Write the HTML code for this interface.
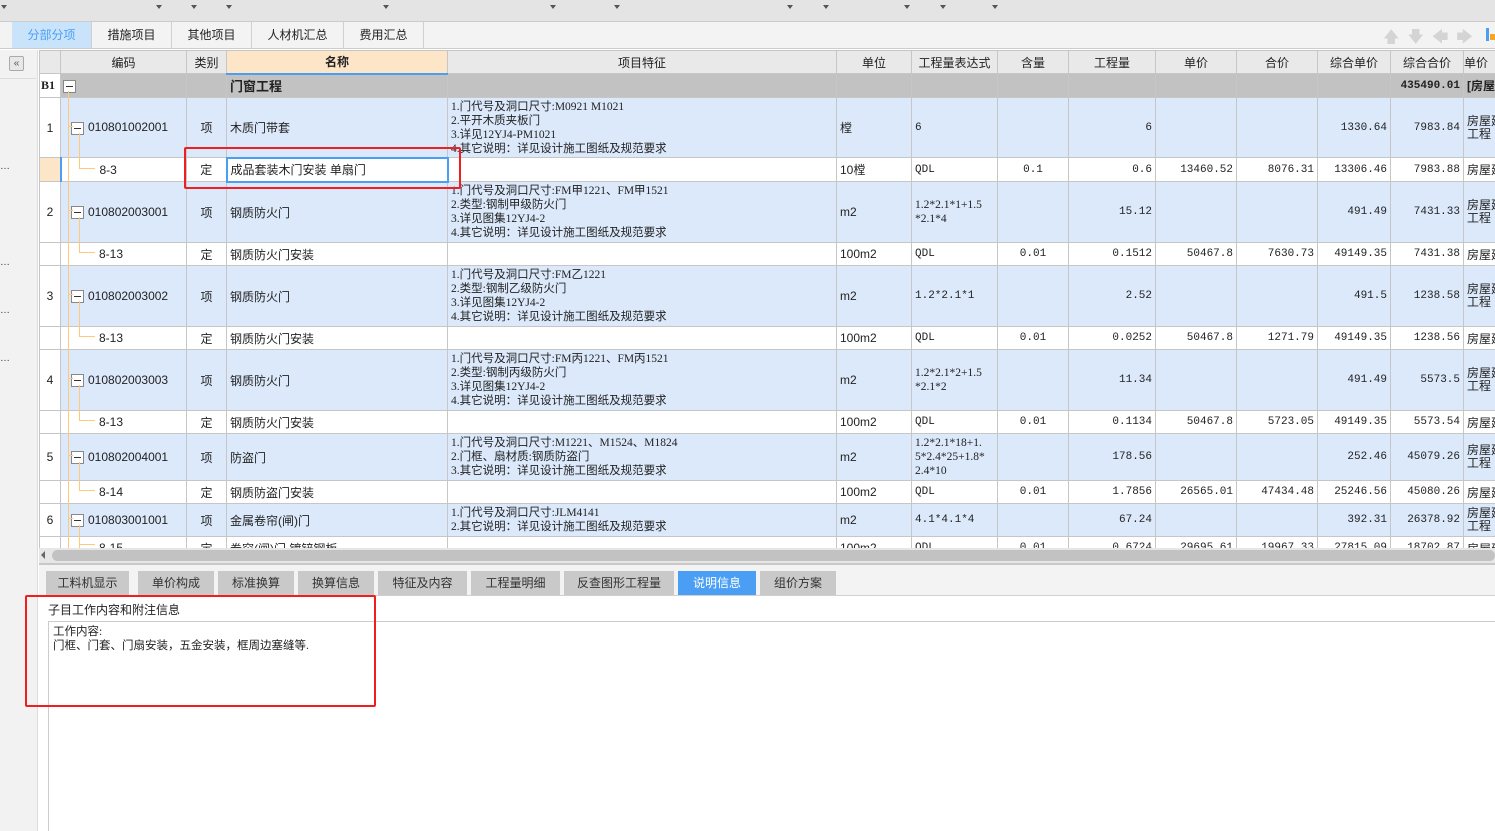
<!DOCTYPE html>
<html><head><meta charset="utf-8"><style>
*{margin:0;padding:0;box-sizing:border-box}
body{width:1495px;height:831px;overflow:hidden;background:#fff;font-family:"Liberation Sans","Noto Sans CJK SC",sans-serif;font-size:12px;color:#222;position:relative}
.a{position:absolute}
.tri{position:absolute;top:5px;width:0;height:0;border-left:3px solid transparent;border-right:3px solid transparent;border-top:4px solid #555}
.tab{position:absolute;top:22px;height:26px;line-height:27px;text-align:center;border-right:1px solid #d0d0d0;font-size:12px;color:#222}
table{border-collapse:collapse;table-layout:fixed;position:absolute;left:0;top:0;width:1464px}
td{border:1px solid #c6c6c6;padding:0 3px;white-space:nowrap;overflow:hidden;vertical-align:middle}
th{border:1px solid #c6c6c6;background:#e9e9e9;font-weight:normal;font-size:12px;height:23px}
.it td{background:#dce9fb}
.it td.n,.ch td.n{background:#fff;text-align:center}
.ch td{background:#fff}
.m{font-family:"Liberation Mono","Noto Sans CJK SC",monospace;font-size:11px}
.f{font-size:11.5px;line-height:14px;white-space:pre;font-family:"Liberation Serif","Noto Sans CJK SC",sans-serif}
.r{text-align:right}
.c{text-align:center}
.box{display:inline-block;width:13px;height:13px;border:1px solid #888;background:#fff;vertical-align:middle;position:relative;margin-left:10px;margin-right:4px}
.box:after{content:"";position:absolute;left:2px;right:2px;top:5px;height:1px;background:#333}
.ln{position:absolute;background:#ffc87a}
.bt{position:absolute;top:571px;height:24px;line-height:24px;text-align:center;background:#c9c9c9;color:#333;font-size:12px}
</style></head><body>
<div class="a" style="left:0;top:0;width:1495px;height:22px;background:#e4e4e4;border-bottom:1px solid #ccc"></div>
<div class="tri" style="left:1px"></div><div class="tri" style="left:156px"></div><div class="tri" style="left:191px"></div><div class="tri" style="left:226px"></div><div class="tri" style="left:383px"></div><div class="tri" style="left:550px"></div><div class="tri" style="left:614px"></div><div class="tri" style="left:787px"></div><div class="tri" style="left:823px"></div><div class="tri" style="left:904px"></div><div class="tri" style="left:940px"></div><div class="tri" style="left:992px"></div>
<div class="a" style="left:0;top:22px;width:1495px;height:27px;background:#f3f3f3;border-bottom:1px solid #ccc"></div>
<div class="tab" style="left:12px;width:80px;background:#c9e3fb;color:#4a9ff5">分部分项</div>
<div class="tab" style="left:92px;width:80px">措施项目</div>
<div class="tab" style="left:172px;width:80px">其他项目</div>
<div class="tab" style="left:252px;width:92px">人材机汇总</div>
<div class="tab" style="left:344px;width:80px">费用汇总</div>
<div class="a" style="left:1383px;top:26px;color:#d4d4d4;font-size:16px;letter-spacing:8px">🡅🡇🡄🡆</div>
<div class="a" style="left:1486px;top:28px;width:3px;height:13px;background:#4a9ff5"></div>
<div class="a" style="left:1490px;top:34px;width:5px;height:6px;background:#f5a623"></div>
<div class="a" style="left:0;top:50px;width:38px;height:781px;background:#f2f2f2;border-right:1px solid #ddd"></div>
<div class="a" style="left:9px;top:56px;width:15px;height:15px;border:1px solid #aaa;border-radius:2px;background:#e8e8e8;font-size:10px;line-height:13px;text-align:center;color:#555">&laquo;</div>
<div class="a" style="left:0;top:78px;width:36px;height:1px;background:#ddd"></div>
<div class="a" style="left:0;top:161px;font-size:10px;color:#336">…</div>
<div class="a" style="left:0;top:257px;font-size:10px;color:#336">…</div>
<div class="a" style="left:0;top:305px;font-size:10px;color:#336">…</div>
<div class="a" style="left:0;top:353px;font-size:10px;color:#336">…</div>
<div class="a" style="left:39px;top:50px;width:1456px;height:498px;overflow:hidden">
<table>
<colgroup><col style="width:21px"><col style="width:126px"><col style="width:40px"><col style="width:221px"><col style="width:389px"><col style="width:75px"><col style="width:86px"><col style="width:71px"><col style="width:87px"><col style="width:81px"><col style="width:81px"><col style="width:73px"><col style="width:73px"><col style="width:40px"></colgroup>
<tr style="height:23px"><th></th><th>编码</th><th>类别</th><th style="background:#fde5c8;font-weight:bold;border-bottom:2px solid #4a9ff5">名称</th><th>项目特征</th><th>单位</th><th>工程量表达式</th><th>含量</th><th>工程量</th><th>单价</th><th>合价</th><th>综合单价</th><th>综合合价</th><th style="text-align:left">单价</th></tr>
<tr style="height:24px;background:#c2c2c2;font-weight:bold"><td style="background:#fff;font-family:'Liberation Serif',serif;font-weight:bold;padding:0 1px">B1</td><td style="padding:0"><span class="box" style="margin-left:2px"></span></td><td></td><td style="font-size:13px">门窗工程</td><td></td><td></td><td></td><td></td><td></td><td></td><td></td><td></td><td class="r m" style="font-weight:bold">435490.01</td><td style="font-weight:bold">[房屋</td></tr>
<tr class="it" style="height:60px"><td class="n">1</td><td style="padding:0"><span class="box"></span>010801002001</td><td class="c">项</td><td>木质门带套</td><td class="f">1.门代号及洞口尺寸:M0921 M1021
2.平开木质夹板门
3.详见12YJ4-PM1021
4.其它说明：详见设计施工图纸及规范要求</td><td>樘</td><td class="m">6</td><td></td><td class="r m">6</td><td></td><td></td><td class="r m">1330.64</td><td class="r m">7983.84</td><td style="line-height:13px">房屋建<br>工程</td></tr>
<tr class="ch" style="height:24px"><td class="n" style="background:#fde5c8;border-right:2px solid #4a9ff5"></td><td style="padding-left:38px">8-3</td><td class="c">定</td><td style="border:2px solid #4a9ff5">成品套装木门安装 单扇门</td><td></td><td>10樘</td><td class="m">QDL</td><td class="c m">0.1</td><td class="r m">0.6</td><td class="r m">13460.52</td><td class="r m">8076.31</td><td class="r m">13306.46</td><td class="r m">7983.88</td><td>房屋建</td></tr>
<tr class="it" style="height:61px"><td class="n">2</td><td style="padding:0"><span class="box"></span>010802003001</td><td class="c">项</td><td>钢质防火门</td><td class="f">1.门代号及洞口尺寸:FM甲1221、FM甲1521
2.类型:钢制甲级防火门
3.详见图集12YJ4-2
4.其它说明：详见设计施工图纸及规范要求</td><td>m2</td><td class="f">1.2*2.1*1+1.5
*2.1*4</td><td></td><td class="r m">15.12</td><td></td><td></td><td class="r m">491.49</td><td class="r m">7431.33</td><td style="line-height:13px">房屋建<br>工程</td></tr>
<tr class="ch" style="height:23px"><td class="n"></td><td style="padding-left:38px">8-13</td><td class="c">定</td><td>钢质防火门安装</td><td></td><td>100m2</td><td class="m">QDL</td><td class="c m">0.01</td><td class="r m">0.1512</td><td class="r m">50467.8</td><td class="r m">7630.73</td><td class="r m">49149.35</td><td class="r m">7431.38</td><td>房屋建</td></tr>
<tr class="it" style="height:61px"><td class="n">3</td><td style="padding:0"><span class="box"></span>010802003002</td><td class="c">项</td><td>钢质防火门</td><td class="f">1.门代号及洞口尺寸:FM乙1221
2.类型:钢制乙级防火门
3.详见图集12YJ4-2
4.其它说明：详见设计施工图纸及规范要求</td><td>m2</td><td class="m">1.2*2.1*1</td><td></td><td class="r m">2.52</td><td></td><td></td><td class="r m">491.5</td><td class="r m">1238.58</td><td style="line-height:13px">房屋建<br>工程</td></tr>
<tr class="ch" style="height:23px"><td class="n"></td><td style="padding-left:38px">8-13</td><td class="c">定</td><td>钢质防火门安装</td><td></td><td>100m2</td><td class="m">QDL</td><td class="c m">0.01</td><td class="r m">0.0252</td><td class="r m">50467.8</td><td class="r m">1271.79</td><td class="r m">49149.35</td><td class="r m">1238.56</td><td>房屋建</td></tr>
<tr class="it" style="height:61px"><td class="n">4</td><td style="padding:0"><span class="box"></span>010802003003</td><td class="c">项</td><td>钢质防火门</td><td class="f">1.门代号及洞口尺寸:FM丙1221、FM丙1521
2.类型:钢制丙级防火门
3.详见图集12YJ4-2
4.其它说明：详见设计施工图纸及规范要求</td><td>m2</td><td class="f">1.2*2.1*2+1.5
*2.1*2</td><td></td><td class="r m">11.34</td><td></td><td></td><td class="r m">491.49</td><td class="r m">5573.5</td><td style="line-height:13px">房屋建<br>工程</td></tr>
<tr class="ch" style="height:23px"><td class="n"></td><td style="padding-left:38px">8-13</td><td class="c">定</td><td>钢质防火门安装</td><td></td><td>100m2</td><td class="m">QDL</td><td class="c m">0.01</td><td class="r m">0.1134</td><td class="r m">50467.8</td><td class="r m">5723.05</td><td class="r m">49149.35</td><td class="r m">5573.54</td><td>房屋建</td></tr>
<tr class="it" style="height:47px"><td class="n">5</td><td style="padding:0"><span class="box"></span>010802004001</td><td class="c">项</td><td>防盗门</td><td class="f">1.门代号及洞口尺寸:M1221、M1524、M1824
2.门框、扇材质:钢质防盗门
3.其它说明：详见设计施工图纸及规范要求</td><td>m2</td><td class="f">1.2*2.1*18+1.
5*2.4*25+1.8*
2.4*10</td><td></td><td class="r m">178.56</td><td></td><td></td><td class="r m">252.46</td><td class="r m">45079.26</td><td style="line-height:13px">房屋建<br>工程</td></tr>
<tr class="ch" style="height:23px"><td class="n"></td><td style="padding-left:38px">8-14</td><td class="c">定</td><td>钢质防盗门安装</td><td></td><td>100m2</td><td class="m">QDL</td><td class="c m">0.01</td><td class="r m">1.7856</td><td class="r m">26565.01</td><td class="r m">47434.48</td><td class="r m">25246.56</td><td class="r m">45080.26</td><td>房屋建</td></tr>
<tr class="it" style="height:33px"><td class="n">6</td><td style="padding:0"><span class="box"></span>010803001001</td><td class="c">项</td><td>金属卷帘(闸)门</td><td class="f">1.门代号及洞口尺寸:JLM4141
2.其它说明：详见设计施工图纸及规范要求</td><td>m2</td><td class="m">4.1*4.1*4</td><td></td><td class="r m">67.24</td><td></td><td></td><td class="r m">392.31</td><td class="r m">26378.92</td><td style="line-height:13px">房屋建<br>工程</td></tr>
<tr class="ch" style="height:23px"><td class="n"></td><td style="padding-left:38px">8-15</td><td class="c">定</td><td>卷帘(闸)门 镀锌钢板</td><td></td><td>100m2</td><td class="m">QDL</td><td class="c m">0.01</td><td class="r m">0.6724</td><td class="r m">29695.61</td><td class="r m">19967.33</td><td class="r m">27815.09</td><td class="r m">18702.87</td><td>房屋建</td></tr>
</table>
</div>
<div class="ln" style="left:68px;top:91px;width:1px;height:457px"></div>
<div class="ln" style="left:68px;top:126px;width:5px;height:1px"></div>
<div class="ln" style="left:79px;top:133px;width:1px;height:36px"></div><div class="ln" style="left:79px;top:168px;width:16px;height:1px"></div>
<div class="ln" style="left:68px;top:210px;width:5px;height:1px"></div>
<div class="ln" style="left:79px;top:217px;width:1px;height:36px"></div><div class="ln" style="left:79px;top:252px;width:16px;height:1px"></div>
<div class="ln" style="left:68px;top:294px;width:5px;height:1px"></div>
<div class="ln" style="left:79px;top:301px;width:1px;height:36px"></div><div class="ln" style="left:79px;top:336px;width:16px;height:1px"></div>
<div class="ln" style="left:68px;top:378px;width:5px;height:1px"></div>
<div class="ln" style="left:79px;top:385px;width:1px;height:36px"></div><div class="ln" style="left:79px;top:420px;width:16px;height:1px"></div>
<div class="ln" style="left:68px;top:455px;width:5px;height:1px"></div>
<div class="ln" style="left:79px;top:462px;width:1px;height:29px"></div><div class="ln" style="left:79px;top:490px;width:16px;height:1px"></div>
<div class="ln" style="left:68px;top:518px;width:5px;height:1px"></div>
<div class="ln" style="left:79px;top:525px;width:1px;height:23px"></div><div class="ln" style="left:79px;top:544px;width:16px;height:1px"></div>
<div class="a" style="left:184px;top:147px;width:277px;height:42px;border:2px solid #f01e1e;border-radius:2px"></div>
<div class="a" style="left:39px;top:548px;width:1456px;height:17px;background:#e6e6e6;border-bottom:2px solid #c8c8c8"></div>
<div class="a" style="left:41px;top:551px;width:0;height:0;border-top:4px solid transparent;border-bottom:4px solid transparent;border-right:4px solid #666"></div>
<div class="a" style="left:52px;top:550px;width:1443px;height:11px;background:#c2c2c2;border-radius:6px"></div>
<div class="a" style="left:39px;top:565px;width:1456px;height:31px;background:#f3f3f3;border-bottom:1px solid #d0d0d0"></div>
<div class="bt" style="left:46px;width:83px">工料机显示</div>
<div class="bt" style="left:138px;width:76px">单价构成</div>
<div class="bt" style="left:218px;width:76px">标准换算</div>
<div class="bt" style="left:298px;width:76px">换算信息</div>
<div class="bt" style="left:378px;width:89px">特征及内容</div>
<div class="bt" style="left:471px;width:89px">工程量明细</div>
<div class="bt" style="left:564px;width:110px">反查图形工程量</div>
<div class="bt" style="left:678px;width:78px;background:#4a9ff5;color:#fff">说明信息</div>
<div class="bt" style="left:760px;width:76px">组价方案</div>
<div class="a" style="left:48px;top:601px;font-size:12px">子目工作内容和附注信息</div>
<div class="a" style="left:48px;top:621px;width:1447px;height:210px;border-left:1px solid #ccc;border-top:1px solid #ccc"></div>
<div class="a" style="left:53px;top:625px;font-size:11.5px;line-height:14px;font-family:'Liberation Serif','Noto Sans CJK SC',sans-serif">工作内容:<br>门框、门套、门扇安装，五金安装，框周边塞缝等.</div>
<div class="a" style="left:25px;top:595px;width:351px;height:112px;border:2px solid #f01e1e;border-radius:2px"></div>
</body></html>
